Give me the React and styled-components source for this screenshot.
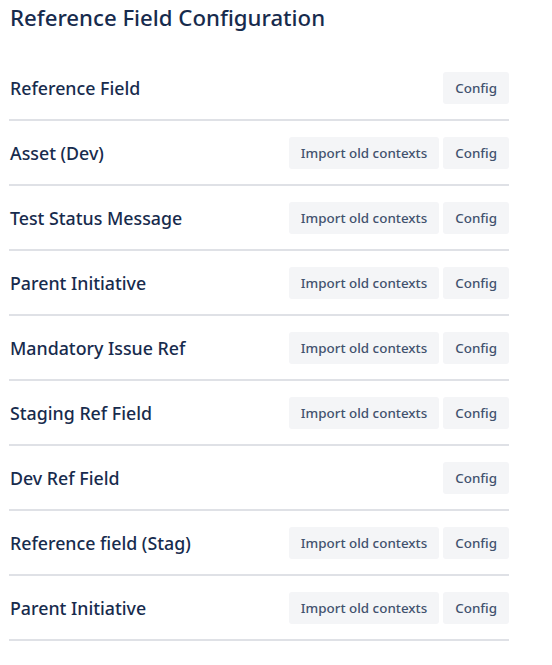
import styled, { createGlobalStyle } from "styled-components";

const Global = createGlobalStyle`
    body {
        margin: 0;
        background: #fff;
        font-family: "Noto Sans", "Open Sans", sans-serif;
        color: #172b4d;
    }
`;
const Page = styled.div`
    width: 500px;
    padding: 0 0 0 9px;
`;
const Title = styled.h1`
    margin: 0;
    height: 56px;
    padding-top: 2px;
    box-sizing: border-box;
    font-size: 22.2px;
    font-weight: 500;
    line-height: 32px;
    color: #172b4d;
    padding-left: 1px;
`;
const List = styled.ul`
    list-style: none;
    margin: 0;
    padding: 0;
`;
const Row = styled.li`
    height: 63px;
    border-bottom: 2px solid #dfe1e6;
    display: flex;
    align-items: center;
    justify-content: space-between;
`;
const Name = styled.span`
    font-size: 17.8px;
    font-weight: 500;
    color: #172b4d;
    padding-left: 1px;
    padding-top: 1px;
`;
const Actions = styled.div`
    display: flex;
    gap: 4px;
`;
const Button = styled.button`
    height: 32px;
    padding: 0 12px;
    border: none;
    border-radius: 3px;
    background: #f4f5f7;
    color: #42526e;
    font-family: inherit;
    font-size: 13.4px;
    font-weight: 500;
    cursor: pointer;
`;

const fields = [
    { name: "Reference Field", legacy: false },
    { name: "Asset (Dev)", legacy: true },
    { name: "Test Status Message", legacy: true },
    { name: "Parent Initiative", legacy: true },
    { name: "Mandatory Issue Ref", legacy: true },
    { name: "Staging Ref Field", legacy: true },
    { name: "Dev Ref Field", legacy: false },
    { name: "Reference field (Stag)", legacy: true },
    { name: "Parent Initiative", legacy: true },
];

export default function App() {
    return <>
        <Global />
        <Page>
            <Title>Reference Field Configuration</Title>
            <List>
                {fields.map((f, i) => <Row key={i}>
                    <Name>{f.name}</Name>
                    <Actions>
                        {f.legacy && <Button>Import old contexts</Button>}
                        <Button>Config</Button>
                    </Actions>
                </Row>)}
            </List>
        </Page>
    </>;
}
